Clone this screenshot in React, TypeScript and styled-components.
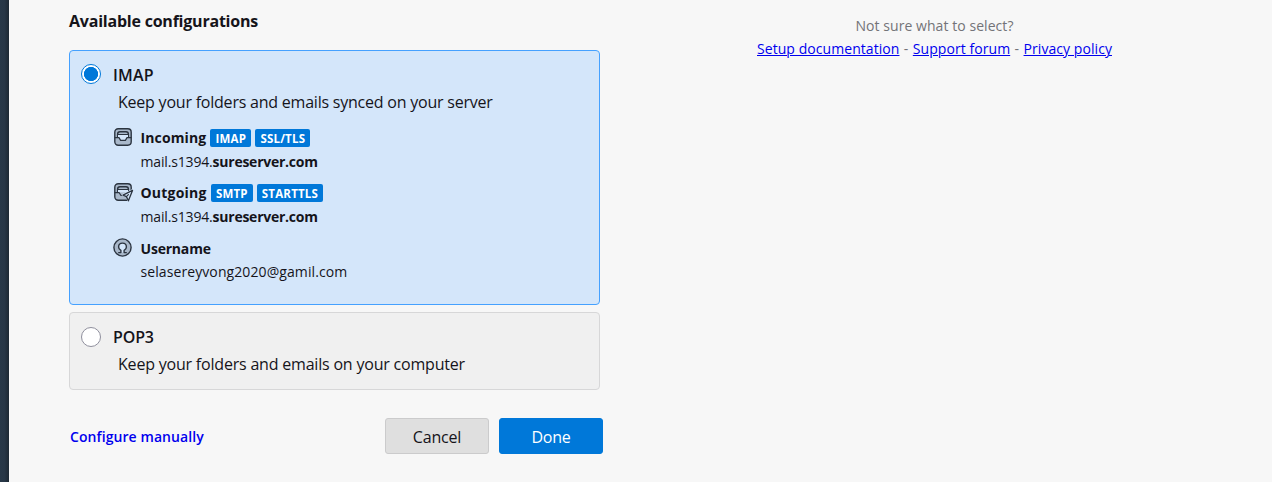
import React from "react";
import styled, { createGlobalStyle } from "styled-components";

const GlobalStyle = createGlobalStyle`
  * { box-sizing: border-box; }
  body { margin: 0; background: #f7f7f7; font-family: "Open Sans", "Noto Sans", sans-serif; color: #15141a; overflow: hidden; }
`;

const Page = styled.div`
  display: flex;
  height: 482px;
  width: 1272px;
  background: #f7f7f7;
`;
const Edge = styled.div`
  width: 9px;
  flex: none;
  background: linear-gradient(to right, #283848 0, #273646 50%, #1d2833 100%);
`;
const Main = styled.main`
  width: 594px;
  padding: 8px 0 0 60px;
  flex: none;
`;
const Text = styled.span<{ $size: number; $weight?: number; $track?: number }>`
  font-size: ${(p) => p.$size}px;
  font-weight: ${(p) => p.$weight ?? 400};
  letter-spacing: ${(p) => p.$track ?? 0}px;
  white-space: pre;
`;
const Title = styled.h1`
  margin: 0 0 16px;
  height: 26px;
  line-height: 26px;
  font-size: 16px;
  font-weight: 700;
  letter-spacing: -0.22px;
  white-space: nowrap;
`;
const Card = styled.section<{ $active?: boolean }>`
  width: 531px;
  height: ${(p) => (p.$active ? 255 : 78)}px;
  margin-bottom: 7px;
  padding: 11px;
  border: 1px solid ${(p) => (p.$active ? "#45a1ff" : "#d7d7d8")};
  border-radius: 4px;
  background: ${(p) => (p.$active ? "#d4e6fa" : "#f0f0f0")};
`;
const Head = styled.label`
  display: flex;
  align-items: center;
  gap: 12px;
  height: 26px;
  line-height: 26px;
`;
const Radio = styled.span<{ $on?: boolean }>`
  width: 20px;
  height: 20px;
  margin-top: ${(p) => (p.$on ? -2 : 0)}px;
  border-radius: 50%;
  border: 1px solid ${(p) => (p.$on ? "#0078d9" : "#8f8f9d")};
  background: ${(p) => (p.$on ? "radial-gradient(circle, #0078d9 0 6.8px, #fff 7.4px)" : "#fff")};
`;
const Description = styled.div`
  height: 28px;
  line-height: 28px;
  padding-left: 37px;
`;
const Detail = styled.div<{ $gap: number }>`
  margin-top: ${(p) => p.$gap}px;
  padding-left: 32px;
`;
const DetailHead = styled.div`
  display: flex;
  align-items: center;
  height: 26px;
  line-height: 26px;
`;
const IconSlot = styled.span`
  width: 27.5px;
  height: 20px;
  margin-top: -2px;
  flex: none;
`;
const Icon = styled.svg`
  display: block;
  width: 20px;
  height: 20px;
  overflow: visible;
`;
const DetailValue = styled.div<{ $tight?: boolean }>`
  height: 22px;
  line-height: ${(p) => (p.$tight ? 18 : 20)}px;
  padding-left: 27.5px;
`;
const Badge = styled.span<{ $w: number; $track: number }>`
  width: ${(p) => p.$w}px;
  height: 18px;
  line-height: 19px;
  margin-left: 4px;
  border-radius: 2px;
  background: #0078d9;
  color: #fff;
  font-size: 11.5px;
  font-weight: 700;
  letter-spacing: ${(p) => p.$track}px;
  text-align: center;
  white-space: nowrap;
`;
const Footer = styled.footer`
  display: flex;
  align-items: center;
  height: 36px;
  margin-top: 28px;
`;
const Manual = styled.a`
  width: 316px;
  padding-left: 1px;
  color: #0000ee;
  font-size: 14px;
  font-weight: 600;
  letter-spacing: 0.08px;
`;
const Button = styled.button<{ $primary?: boolean }>`
  width: 104px;
  height: 36px;
  padding: 1px 0 0;
  margin-right: ${(p) => (p.$primary ? 0 : 10)}px;
  flex: none;
  border: 1px solid ${(p) => (p.$primary ? "#0078d9" : "#cbcbcc")};
  border-radius: 3px;
  background: ${(p) => (p.$primary ? "#0078d9" : "#dfdfdf")};
  color: ${(p) => (p.$primary ? "#fff" : "#15141a")};
  font: 400 16px "Open Sans", sans-serif;
  letter-spacing: -0.2px;
`;
const Help = styled.aside`
  width: 663px;
  padding-top: 14px;
  text-align: center;
  color: #737378;
  font-size: 14px;
  line-height: 23px;
  letter-spacing: 0.06px;
  white-space: nowrap;
`;
const Separator = styled.span`
  margin: 0 4.4px;
`;
const Link = styled.a`
  color: #0000ee;
  text-decoration: underline;
  text-underline-offset: 1px;
  text-decoration-thickness: 1px;
`;

const Tray = ({ sending }: { sending?: boolean }) => (
  <Icon viewBox="0 0 20 20" fill="none" stroke="#2b3440" strokeWidth="1.4" strokeLinejoin="round" strokeLinecap="round">
    <rect x="1.8" y="1.8" width="16.4" height="16.4" rx="3.4" fill="#a9b8ca" />
    <path d="M4.6 10V7.2q0-2.4 2.4-2.4h6q2.4 0 2.4 2.4V10" />
    {sending ? (
      <>
        <path d="M5 7.6h10v2.8H5z" fill="#d4e6fa" stroke="none" />
        <path d="M5 7.5h10M2 10.7h4.2l1.6 2.6h1" strokeWidth="1.2" />
        <path d="M19.4 8 9.4 12.8l4.4 2 1.6 4.6h3.6z" fill="#d4e6fa" stroke="#d4e6fa" strokeWidth="1.6" />
        <path d="M19.5 8.4 10 13.2l3.4 1.4 2 4.2z" fill="#d4e6fa" strokeWidth="1.3" />
        <path d="m13.4 14.6 2-2" strokeWidth="1.2" />
      </>
    ) : (
      <>
        <path d="M5 7.6h10v2.9h-1l-1.6 2.8H7.6L6 10.5H5z" fill="#d4e6fa" stroke="none" />
        <path d="M5 7.5h10M2 10.6h4l1.6 2.8h4.8l1.6-2.8h4" strokeWidth="1.2" />
      </>
    )}
  </Icon>
);
const Person = () => (
  <Icon viewBox="0 0 20 20" fill="none" stroke="#2b3440" strokeWidth="1.4" strokeLinejoin="round">
    <circle cx="9.5" cy="9.5" r="8.6" fill="#a9b8ca" />
    <path d="M5.2 14.6h2.7v-2.2C6.5 11.6 5.6 10.6 5.6 8.9c0-2.2 1.7-3.8 3.9-3.8s3.9 1.6 3.9 3.8c0 1.7-.9 2.7-2.3 3.5v2.2h2.7" fill="#d4e6fa" />
  </Icon>
);

interface ServerProps {
  icon: React.ReactNode;
  label: string;
  gap: number;
  track: number;
  badges: { text: string; width: number; track: number }[];
}
const Server = ({ icon, label, gap, track, badges }: ServerProps) => (
  <Detail $gap={gap}>
    <DetailHead>
      <IconSlot>{icon}</IconSlot>
      <Text $size={14} $weight={700} $track={track}>{label}</Text>
      {badges.map((b) => (
        <Badge key={b.text} $w={b.width} $track={b.track}>{b.text}</Badge>
      ))}
    </DetailHead>
    <DetailValue>
      <Text $size={14} $track={-0.16}>mail.s1394.</Text>
      <Text $size={14} $weight={700} $track={-0.25}>sureserver.com</Text>
    </DetailValue>
  </Detail>
);

export default function App() {
  return (
    <Page>
      <GlobalStyle />
      <Edge />
      <Main>
        <Title>Available configurations</Title>
        <Card $active>
          <Head>
            <Radio $on />
            <Text $size={16} $weight={600} $track={0.2}>IMAP</Text>
          </Head>
          <Description>
            <Text $size={16} $track={-0.22}>Keep your folders and emails synced on your server</Text>
          </Description>
          <Server
            icon={<Tray />}
            label="Incoming"
            gap={9}
            track={0.12}
            badges={[
              { text: "IMAP", width: 41, track: 0.2 },
              { text: "SSL/TLS", width: 55, track: 0.2 },
            ]}
          />
          <Server
            icon={<Tray sending />}
            label="Outgoing"
            gap={7}
            track={0.22}
            badges={[
              { text: "SMTP", width: 42.3, track: 0.2 },
              { text: "STARTTLS", width: 66, track: 0.2 },
            ]}
          />
          <Detail $gap={8}>
            <DetailHead>
              <IconSlot><Person /></IconSlot>
              <Text $size={14} $weight={700} $track={-0.2}>Username</Text>
            </DetailHead>
            <DetailValue $tight>
              <Text $size={14} $track={0.09}>selasereyvong2020@gamil.com</Text>
            </DetailValue>
          </Detail>
        </Card>
        <Card>
          <Head>
            <Radio />
            <Text $size={16} $weight={600} $track={-0.15}>POP3</Text>
          </Head>
          <Description>
            <Text $size={16} $track={-0.2}>Keep your folders and emails on your computer</Text>
          </Description>
        </Card>
        <Footer>
          <Manual>Configure manually</Manual>
          <Button>Cancel</Button>
          <Button $primary>Done</Button>
        </Footer>
      </Main>
      <Help>
        <div>Not sure what to select?</div>
        <div>
          <Link>Setup documentation</Link>
          <Separator>-</Separator>
          <Link>Support forum</Link>
          <Separator>-</Separator>
          <Link>Privacy policy</Link>
        </div>
      </Help>
    </Page>
  );
}
